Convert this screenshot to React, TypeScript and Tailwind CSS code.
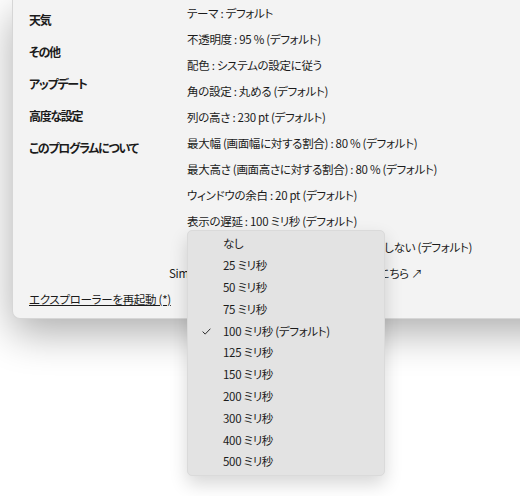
import React from "react";

const font = "font-['Yu_Gothic_UI','Noto_Sans_CJK_JP',sans-serif]";

const nav = ["天気", "その他", "アップデート", "高度な設定", "このプログラムについて"];
const lines = [
  "テーマ : デフォルト",
  "不透明度 : 95 % (デフォルト)",
  "配色 : システムの設定に従う",
  "角の設定 : 丸める (デフォルト)",
  "列の高さ : 230 pt (デフォルト)",
  "最大幅 (画面幅に対する割合) : 80 % (デフォルト)",
  "最大高さ (画面高さに対する割合) : 80 % (デフォルト)",
  "ウィンドウの余白 : 20 pt (デフォルト)",
  "表示の遅延 : 100 ミリ秒 (デフォルト)",
  "ウィンドウの外側をクリックすると閉じる : しない (デフォルト)",
];
const items = [
  "なし",
  "25 ミリ秒",
  "50 ミリ秒",
  "75 ミリ秒",
  "100 ミリ秒 (デフォルト)",
  "125 ミリ秒",
  "150 ミリ秒",
  "200 ミリ秒",
  "300 ミリ秒",
  "400 ミリ秒",
  "500 ミリ秒",
];

export default function App() {
  return (
    <div className={`relative w-[520px] h-[496px] overflow-hidden bg-white ${font} text-[11.5px] tracking-[-0.3px] text-[#1b1b1b] [font-feature-settings:'palt']`}>
      <div className="ml-[12px] w-[600px] h-[319px] bg-[#f3f3f3] rounded-bl-[8px] border-l border-b border-[#d6d6d6] shadow-[0_14px_40px_rgba(0,0,0,0.32)] flex flex-col">
        <div className="flex">
          <div className="w-[174px] pl-[16px] pt-[4px] flex flex-col">
            {nav.map((n) => (
              <div key={n} className="h-[32px] leading-[32px] font-bold text-[12px] tracking-[-1.3px]">
                {n}
              </div>
            ))}
          </div>
          <div className="flex flex-col">
            {lines.map((l) => (
              <div key={l} className="h-[26px] leading-[26px] whitespace-nowrap">
                {l}
              </div>
            ))}
          </div>
        </div>
        <div className="h-[26px] leading-[26px] pl-[156px] whitespace-nowrap">
          Simple Sticky Notes の詳細情報についてはこちら ↗
        </div>
        <div className="h-[26px] leading-[26px] pl-[16px]">
          <span className="underline">エクスプローラーを再起動 (*)</span>
        </div>
      </div>

      <div className="absolute left-[187px] top-[230px] w-[198px] h-[246px] py-[2px] bg-[#e3e3e3] rounded-[5px] border border-[#dadada] shadow-[0_8px_18px_rgba(0,0,0,0.16)] flex flex-col">
        {items.map((it, i) => (
          <div key={it} className="h-[22px] flex items-center">
            <div className="w-[35px] flex justify-end pr-[12px]">
              {i === 4 && (
                <svg width="9" height="7" viewBox="0 0 9 7" fill="none">
                  <path d="M0.6 3.6 L3.2 6.1 L8.4 0.7" stroke="#2b2b2b" strokeWidth="1" />
                </svg>
              )}
            </div>
            <span className="whitespace-nowrap">{it}</span>
          </div>
        ))}
      </div>
    </div>
  );
}
